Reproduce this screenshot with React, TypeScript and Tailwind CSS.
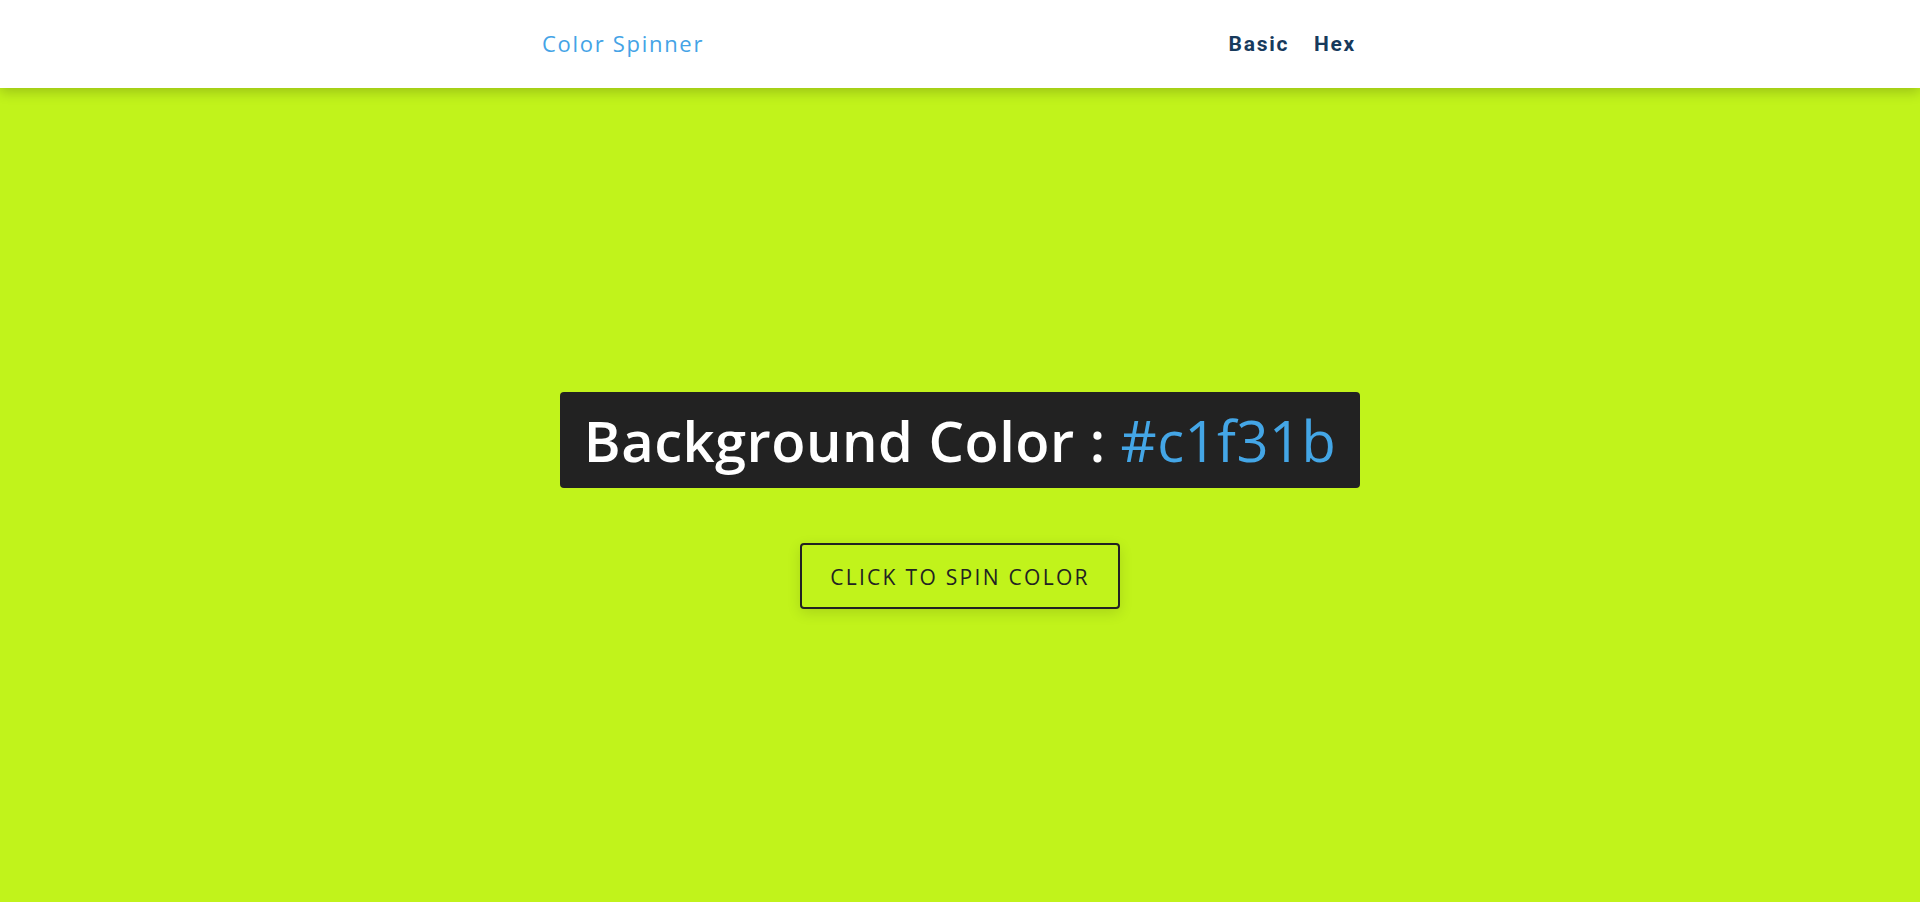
export default function App() {
  const hex = "#c1f31b";
  return (
    <div className="min-h-screen flex flex-col" style={{ background: hex }}>
      <nav className="h-[88px] bg-white shadow-[0_4px_12px_rgba(0,0,0,0.2)] relative z-10">
        <div className="mx-auto w-[836px] pr-[22px] h-full flex items-center justify-between">
          <a className="text-[#44a3e6] text-[22px] tracking-[1.7px] font-medium font-['Open_Sans',sans-serif] -mt-[2px]">
            Color Spinner
          </a>
          <ul className="flex gap-[25px] font-['Roboto',sans-serif] font-bold text-[21px] tracking-[1.7px] text-[#173a5c] mt-[1px]">
            <li>Basic</li>
            <li>Hex</li>
          </ul>
        </div>
      </nav>
      <main className="flex-1 flex flex-col items-center pt-[304px] font-['Open_Sans',sans-serif]">
        <h2 className="bg-[#222222] rounded-[4px] px-[24px] h-[96px] flex items-center text-[56px] font-semibold text-white tracking-[0.5px]">
          Background Color :&nbsp;<span className="text-[#44a6e6] font-medium">{hex}</span>
        </h2>
        <button className="mt-[55px] w-[320px] h-[66px] pt-[3px] border-2 border-[#222] rounded-[4px] text-[21px] font-medium tracking-[2.3px] text-[#222] shadow-[0_4px_14px_rgba(0,0,0,0.12)]">
          CLICK TO SPIN COLOR
        </button>
      </main>
    </div>
  );
}
